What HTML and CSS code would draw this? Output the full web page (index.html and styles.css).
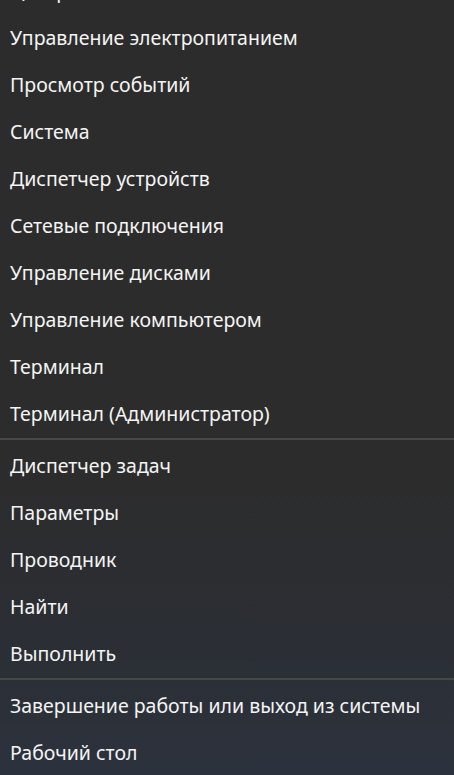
FILE: index.html
```html
<!DOCTYPE html>
<html lang="ru">
<head>
<meta charset="utf-8">
<title>Меню</title>
<link rel="stylesheet" href="styles.css">
</head>
<body>
<nav class="menu">
  <div class="item">Центр мобильности Windows</div>
  <div class="item">Управление электропитанием</div>
  <div class="item">Просмотр событий</div>
  <div class="item">Система</div>
  <div class="item">Диспетчер устройств</div>
  <div class="item">Сетевые подключения</div>
  <div class="item">Управление дисками</div>
  <div class="item">Управление компьютером</div>
  <div class="item">Терминал</div>
  <div class="item">Терминал (Администратор)</div>
  <div class="sep"></div>
  <div class="item">Диспетчер задач</div>
  <div class="item">Параметры</div>
  <div class="item">Проводник</div>
  <div class="item">Найти</div>
  <div class="item">Выполнить</div>
  <div class="sep"></div>
  <div class="item">Завершение работы или выход из системы</div>
  <div class="item">Рабочий стол</div>
</nav>
</body>
</html>
```

FILE: styles.css
```css
html, body {
  margin: 0;
  padding: 0;
  height: 100%;
  overflow: hidden;
}
body {
  background: linear-gradient(to bottom, #2c2c2c 0%, #2c2c2c 60%, #2b2e34 82%, #2c323d 100%);
  font-family: "Noto Sans", "Open Sans", sans-serif;
  color: #f4f4f4;
}
.menu {
  display: flex;
  flex-direction: column;
  margin-top: -33px;
}
.item {
  height: 47px;
  display: flex;
  align-items: center;
  padding-left: 10px;
  font-size: 19.5px;
  white-space: nowrap;
}
.sep {
  height: 2px;
  background: #474747;
  margin: 1px 0 2px;
}
```
